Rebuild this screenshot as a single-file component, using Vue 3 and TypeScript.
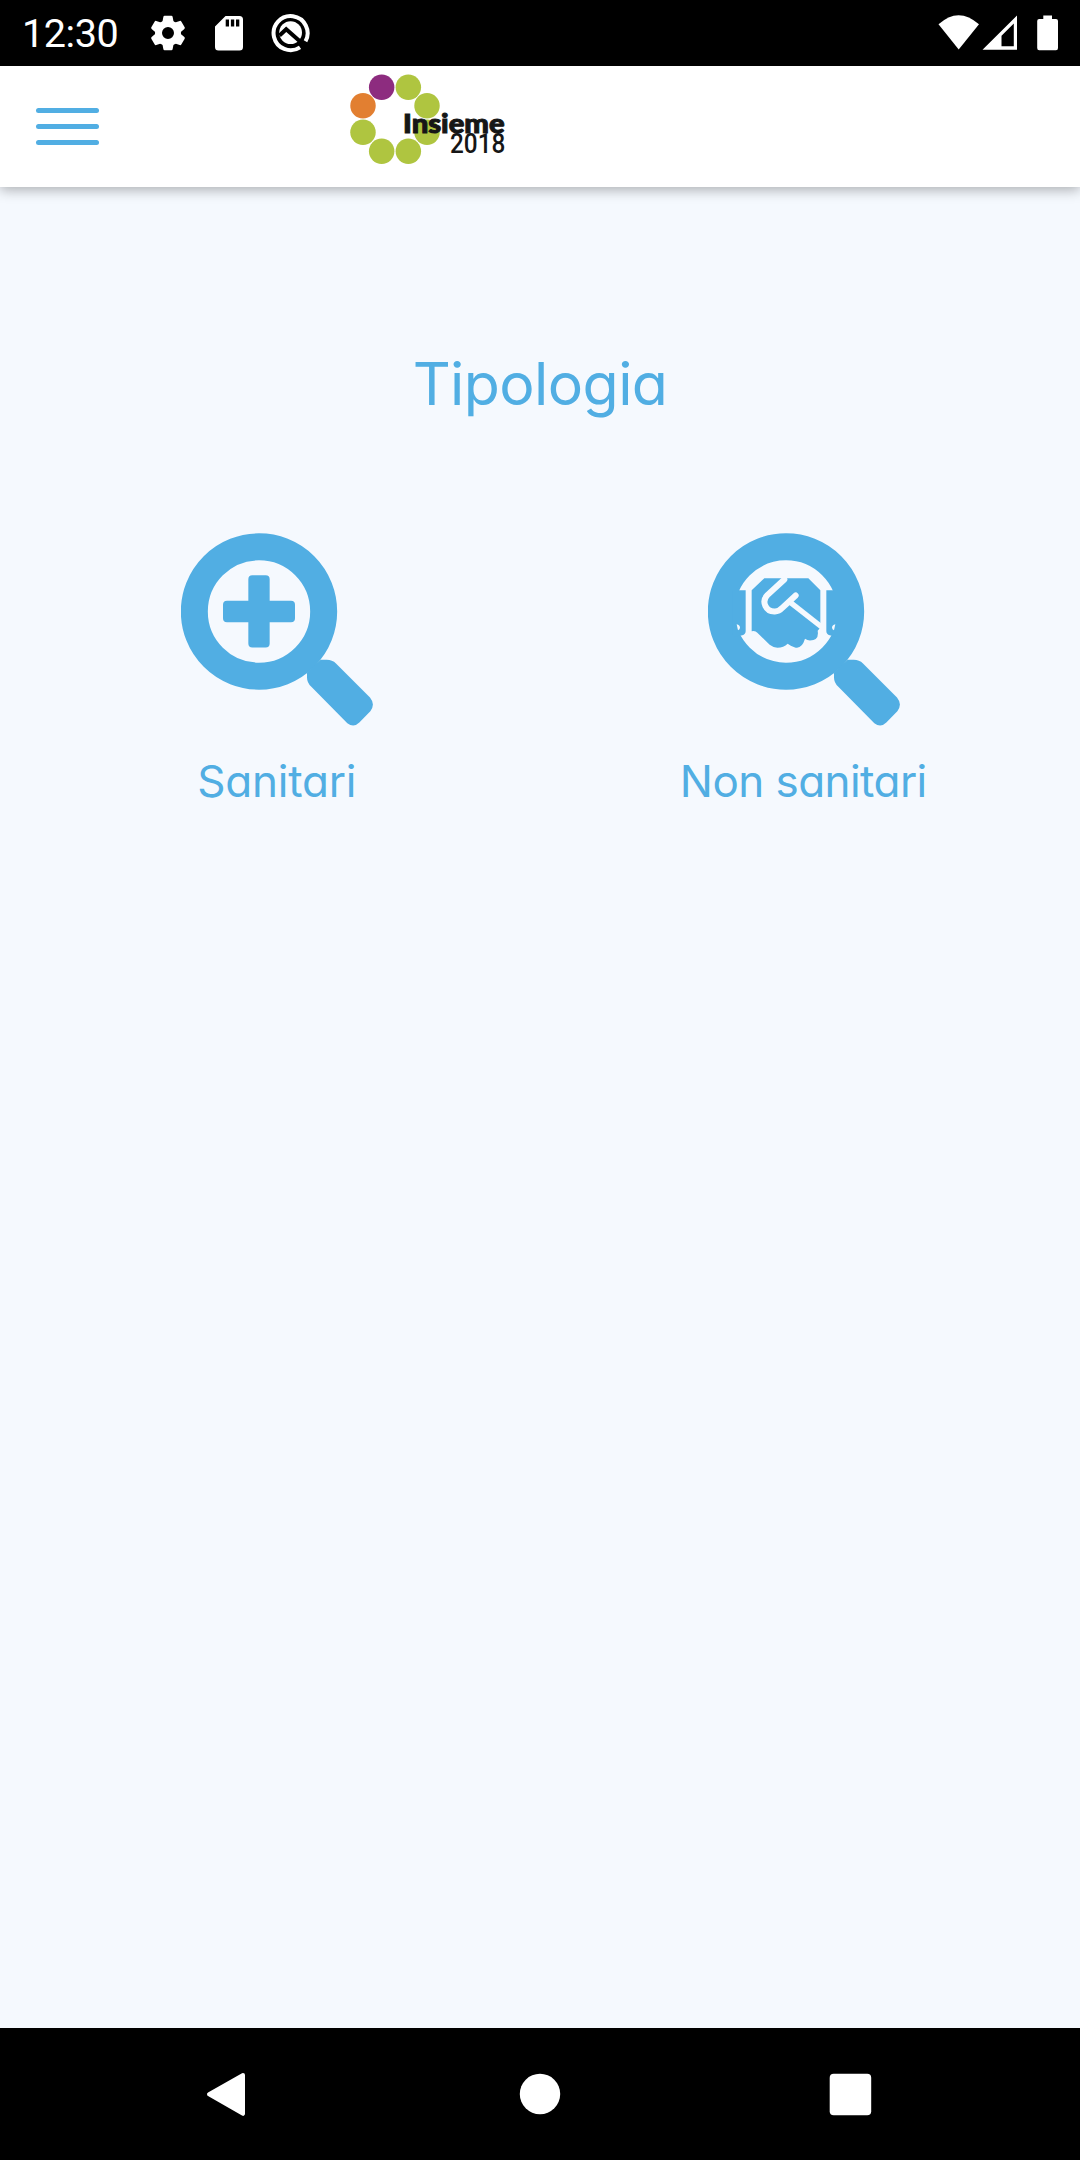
<script setup lang="ts">
interface Category {
  id: 'health' | 'other'
  label: string
}

interface Dot {
  x: number
  y: number
  color: string
}

const categories: Category[] = [
  { id: 'health', label: 'Sanitari' },
  { id: 'other', label: 'Non sanitari' },
]

const green = '#afc540'
const dots: Dot[] = [
  { x: 155, y: 82, color: '#8d2c7f' },
  { x: 235, y: 82, color: green },
  { x: 291, y: 137, color: green },
  { x: 291, y: 217, color: green },
  { x: 235, y: 274, color: green },
  { x: 155, y: 274, color: green },
  { x: 99, y: 217, color: green },
  { x: 99, y: 137, color: '#e27f31' },
]
const teeth: number[] = [0, 60, 120, 180, 240, 300]
</script>

<template>
  <div class="screen">
    <div class="status">
      <span class="clock">12:30</span>
      <svg class="gear" width="36" height="36" viewBox="-18 -18 36 36">
        <g fill="#fff">
          <path v-for="t in teeth" :key="t" :transform="`rotate(${t})`" d="M-6 -9L-4.6 -16.2Q-4.4 -17.3 -3.4 -17.3H3.4Q4.4 -17.3 4.6 -16.2L6 -9Z" />
        </g>
        <circle r="9.5" fill="none" stroke="#fff" stroke-width="7" />
      </svg>
      <svg class="card" width="28" height="35" viewBox="0 0 28 35">
        <path fill="#fff" fill-rule="evenodd" d="M10.5 0H24.5Q28 0 28 3.5V31Q28 34.5 24.5 34.5H3.5Q0 34.5 0 31V10.5ZM10.7 3.6V10.6H14V3.6ZM15.9 3.6V10.6H19.2V3.6ZM21 3.6V10.6H24.3V3.6Z" />
      </svg>
      <svg class="badge" width="40" height="40" viewBox="0 0 40 40">
        <path d="M29 34.3A17 17 0 1 1 34.5 28.3" fill="none" stroke="#fff" stroke-width="4" />
        <circle cx="19.6" cy="19.6" r="11.4" fill="#fff" />
        <path d="M8.5 22.5L15.2 16.2L32.5 31.5" fill="none" stroke="#000" stroke-width="4" />
      </svg>
      <svg class="signals" width="122" height="36" viewBox="0 0 122 36">
        <path fill="#fff" d="M.5 9.3Q20.5 -9 41 9.3L20.7 34.5Z" />
        <path fill="#fff" fill-rule="evenodd" d="M79 .5V34.8H44.5ZM75.8 8.5L63.5 20.8V31.3H75.8Z" />
        <path fill="#fff" d="M105.3 .5H114V4H118Q120 4 120 6V33Q120 35.2 118 35.2H101.2Q99.2 35.2 99.2 33V6Q99.2 4 101.2 4H105.3Z" />
      </svg>
    </div>

    <header class="bar">
      <div class="menu"><i></i><i></i><i></i></div>
      <svg class="logo" width="160" height="100" viewBox="51 30 480 300">
        <circle v-for="(d, i) in dots" :key="i" :cx="d.x" :cy="d.y" r="38.2" :fill="d.color" />
        <text class="brand" x="219" y="218" textLength="305" lengthAdjust="spacingAndGlyphs">Insieme</text>
        <text class="year" x="360" y="279" textLength="166" lengthAdjust="spacingAndGlyphs">2018</text>
      </svg>
    </header>

    <main class="content">
      <h1>Tipologia</h1>
      <div class="choices">
        <div v-for="c in categories" :key="c.id" class="choice">
          <svg :class="c.id + '-icon'" width="192" height="194" viewBox="33 38.5 576 582">
            <circle cx="267" cy="274" r="194" fill="none" stroke="#51aee3" stroke-width="81" />
            <path fill="#51aee3" d="M405 463L452 419H470Q487 419 498 430L600 532Q617 553 601 573L568 607Q551 624 532 609L424 500Q411 488 411 472V455Z" />
            <path v-if="c.id === 'health'" fill="#51aee3" d="M247 165H287Q299 165 299 177V242H363Q375 242 375 254V294Q375 306 363 306H299V370Q299 382 287 382H247Q235 382 235 370V306H171Q159 306 159 294V254Q159 242 171 242H235V177Q235 165 247 165Z" />
            <g v-else transform="translate(-6 0)">
              <path fill="#51aee3" d="M112 210H152V333Q152 343 139 346L112 350ZM434 210H394V333Q394 343 407 346L434 350Z" />
              <path fill="#51aee3" d="M208 174H340L376 210V322Q372 328 368 332Q373 361 345 361Q337 361 330 356Q320 389 298 381Q287 378 278 371Q266 383 247 383Q236 383 224 374L187 338Q181 330 170 333V210Z" />
              <path fill="none" stroke="#f5f9fe" stroke-width="18" stroke-linecap="round" d="M268 178L217 225Q203 239 211 257Q219 275 240 274Q252 274 262 263L302 226" />
              <path fill="none" stroke="#f5f9fe" stroke-width="16" d="M285 246L382 322" />
              <path fill="#f5f9fe" d="M125 312Q135 314 135 322Q135 329 129 330ZM421 312Q411 314 411 322Q411 329 417 330Z" />
            </g>
          </svg>
          <span class="label" :class="c.id">{{ c.label }}</span>
        </div>
      </div>
    </main>

    <nav class="nav">
      <svg width="1080" height="132" viewBox="0 0 1080 132" fill="#fff">
        <path d="M243 47L209 66.3L243 85.8Z" stroke="#fff" stroke-width="4" stroke-linejoin="round" />
        <circle cx="540" cy="66" r="20.2" />
        <rect x="829.7" y="45.7" width="41.5" height="41.5" rx="4" />
      </svg>
    </nav>
  </div>
</template>

<style>
body { margin: 0; }
</style>

<style scoped>
.screen {
  width: 1080px;
  height: 2160px;
  display: flex;
  flex-direction: column;
  overflow: hidden;
  background: #f5f9fe;
}
.status {
  flex: none;
  box-sizing: border-box;
  height: 66px;
  padding-left: 22px;
  display: flex;
  align-items: flex-start;
  background: #000;
}
.clock {
  width: 129px;
  padding-top: 10px;
  color: #fff;
  font: 400 39.5px/47px Roboto, sans-serif;
  letter-spacing: -.4px;
}
.gear { margin: 15px 0 0 -.6px; }
.card { margin: 16px 0 0 29px; }
.badge { margin: 13px 0 0 27.6px; }
.signals { margin: 15px 0 0 627px; }
.bar {
  flex: none;
  position: relative;
  height: 121px;
  display: flex;
  align-items: flex-start;
  background: #fff;
  box-shadow: 0 3px 12px rgba(0, 0, 0, .3);
}
.menu {
  width: 63px;
  margin: 42px 0 0 36px;
  display: flex;
  flex-direction: column;
  gap: 11px;
}
.menu i {
  height: 5px;
  border-radius: 3px;
  background: #51aee3;
}
.logo { margin: 4px 0 0 248px; overflow: visible; }
.brand { font: 900 80px Lato, sans-serif; fill: #161616; stroke: #161616; stroke-width: 3px; }
.year { font: 500 81px Roboto, sans-serif; fill: #161616; }
.content {
  flex: 1;
  color: #51aee3;
  font-family: Inter, sans-serif;
  font-feature-settings: "cv11" 1;
}
h1 {
  margin: 161px 0 0;
  text-align: center;
  font-size: 59px;
  line-height: 72px;
  font-weight: 400;
  letter-spacing: -.6px;
}
.choices {
  margin-top: 113px;
  padding: 0 13.5px;
  display: flex;
}
.choice {
  flex: 1;
  display: flex;
  flex-direction: column;
  align-items: center;
}
.other-icon { margin: 0 -1px 0 1px; }
.label {
  margin-top: 27px;
  font-size: 44px;
  line-height: 54px;
  font-weight: 400;
  letter-spacing: -.2px;
  white-space: nowrap;
}
.label.other { letter-spacing: -.55px; }
.nav {
  flex: none;
  height: 132px;
  background: #000;
}
.nav svg { display: block; }
</style>
